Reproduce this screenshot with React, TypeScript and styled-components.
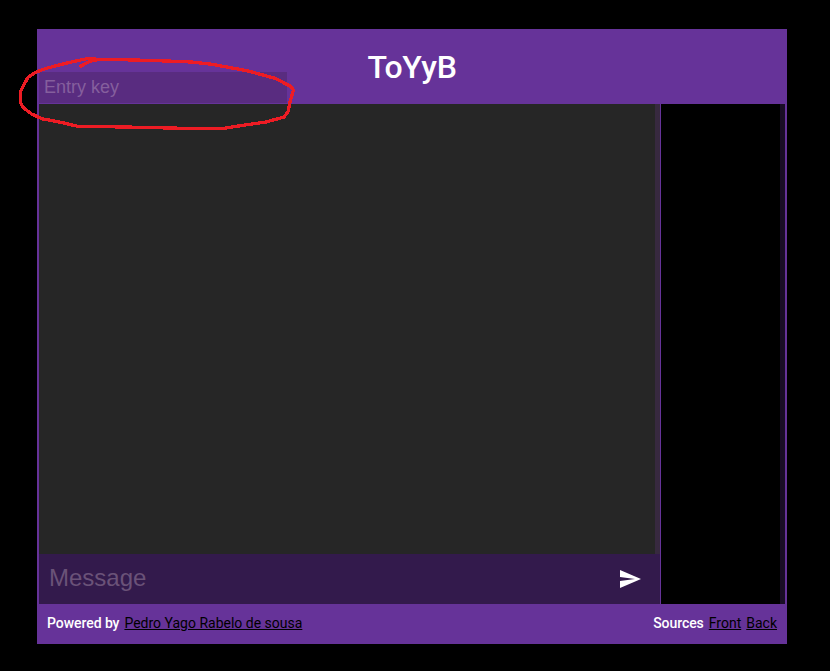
import React from "react";
import styled, { createGlobalStyle } from "styled-components";

const GlobalStyle = createGlobalStyle`
  * { box-sizing: border-box; }
  html, body { margin: 0; background: #000; }
  body { overflow: hidden; font-family: Roboto, sans-serif; }
`;

const Page = styled.div`
  position: relative;
  width: 830px;
  height: 671px;
  padding: 29px 43px 27px 37px;
  background: #000;
`;

const Window = styled.main`
  display: flex;
  flex-direction: column;
  width: 750px;
  height: 615px;
  border: 2px solid #663399;
`;

const Header = styled.header`
  display: grid;
  grid-template-columns: 248px 1fr 248px;
  height: 73px;
  background: #663399;
`;

const Title = styled.h1`
  margin: 17px 0 0;
  color: #fff;
  font-size: 32px;
  font-weight: 500;
  letter-spacing: -0.3px;
  line-height: 38px;
  text-align: center;
`;

const KeyInput = styled.input`
  align-self: end;
  width: 248px;
  height: 31px;
  margin: 0 0 1px;
  padding: 0 5px;
  border: 0;
  outline: 0;
  background: #592c80;
  color: #fff;
  font: 18px "Liberation Sans", Arial, sans-serif;
  &::placeholder { color: #855f9d; opacity: 1; }
`;

const Content = styled.div`
  display: grid;
  grid-template-columns: 621px 1fr;
  height: 500px;
`;

const Chat = styled.section`
  display: flex;
  flex-direction: column;
`;

const Messages = styled.div`
  height: 450px;
  background: #262626;
  border-right: 5px solid #37293f;
`;

const Composer = styled.form`
  display: flex;
  align-items: center;
  height: 50px;
  background: #331a4c;
`;

const MessageInput = styled.input`
  flex: 1;
  min-width: 0;
  height: 50px;
  padding: 0 10px 2px;
  border: 0;
  outline: 0;
  background: transparent;
  color: #fff;
  font: 24px "Liberation Sans", Arial, sans-serif;
  &::placeholder { color: #6a5278; opacity: 1; }
`;

const SendButton = styled.button`
  display: flex;
  align-items: center;
  justify-content: center;
  width: 60px;
  height: 50px;
  padding: 0;
  border: 0;
  background: transparent;
  color: #fff;
`;

const Users = styled.aside`
  border-left: 1px solid #663399;
  border-right: 5px solid #190d26;
  background: #000;
`;

const Footer = styled.footer`
  display: flex;
  justify-content: space-between;
  height: 38px;
  padding: 0 8px;
  background: #663399;
  color: #fff;
  font-size: 14px;
  font-weight: 500;
  line-height: 38px;
`;

const Credits = styled.div`
  display: flex;
  gap: 5px;
`;

const Label = styled.span`
  letter-spacing: -0.06px;
`;

const Link = styled.a`
  color: #000;
  font-weight: 400;
  text-decoration: underline;
`;

const Scribble = styled.svg`
  position: absolute;
  left: 0;
  top: 40px;
  pointer-events: none;
`;

export default function App() {
  return (
    <>
      <GlobalStyle />
      <Page>
        <Window>
          <Header>
            <KeyInput placeholder="Entry key" />
            <Title>ToYyB</Title>
          </Header>
          <Content>
            <Chat>
              <Messages />
              <Composer>
                <MessageInput placeholder="Message" />
                <SendButton type="button" aria-label="Send">
                  <svg width="24" height="24" viewBox="0 0 24 24" fill="currentColor">
                    <path d="M2.01 21L23 12 2.01 3 2 10l15 2-15 2z" />
                  </svg>
                </SendButton>
              </Composer>
            </Chat>
            <Users />
          </Content>
          <Footer>
            <Credits>
              <Label>Powered by</Label>
              <Link href="#">Pedro Yago Rabelo de sousa</Link>
            </Credits>
            <Credits>
              <Label>Sources</Label>
              <Link href="#">Front</Link>
              <Link href="#">Back</Link>
            </Credits>
          </Footer>
        </Window>
        <Scribble width="310" height="100" viewBox="0 40 310 100" fill="none">
          <path
            d="M81 66L89.500 61.500L99 59.300L87 58.700L78 60.500L60 64.700L45 68.700L35 72.500L28 77.500L24.700 83L20.700 91L20.700 103.300L24 108.300L31.700 114L41.700 118.700L63 122.700L77.500 126.300L125 127L183 128.300L224 128.300L243 125.300L266 122L284 117L288 111.700L290.500 100L293.500 90L290 86L275 78.300L247 70.700L212 64.300L192 62L167 61L135 60L99 59.300"
            stroke="#ed1c24"
            strokeWidth="3.300"
            strokeLinecap="round"
            strokeLinejoin="round"
            shapeRendering="crispEdges"
          />
        </Scribble>
      </Page>
    </>
  );
}
